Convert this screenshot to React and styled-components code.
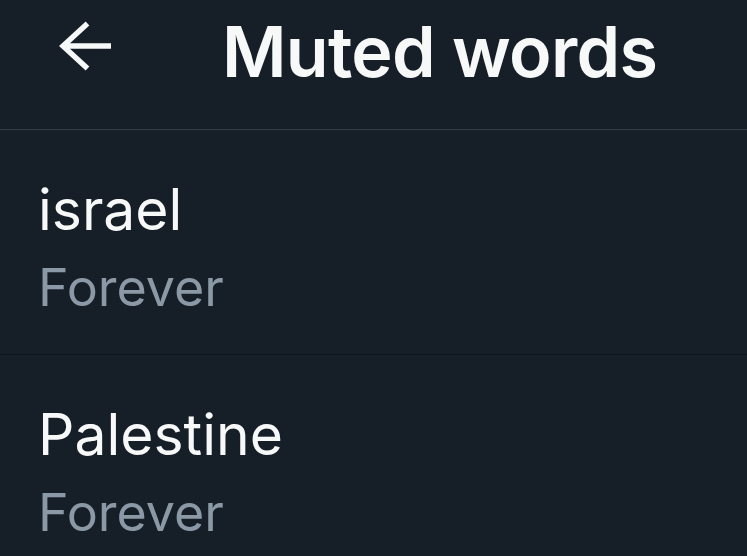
import React from "react";
import styled, { createGlobalStyle } from "styled-components";

const Global = createGlobalStyle`
  html, body { margin: 0; padding: 0; background: #161e28; }
  body { font-family: Inter, "Noto Sans", sans-serif; -webkit-font-smoothing: antialiased; }
`;

const Page = styled.div`
  width: 747px;
  height: 556px;
  overflow: hidden;
  background: #161e28;
  color: #f7f9f9;
`;

const Header = styled.header`
  height: 129px;
  display: flex;
  align-items: flex-start;
  padding-left: 59px;
  border-bottom: 1px solid #353d47;
`;

const BackButton = styled.button`
  margin-top: 21px;
  width: 54px;
  height: 50px;
  padding: 0;
  border: 0;
  background: none;
  color: #f7f9f9;
  display: flex;
`;

const Title = styled.h1`
  margin: 10px 0 0 109px;
  font-size: 70px;
  line-height: 84px;
  font-weight: 600;
  letter-spacing: -0.7px;
`;

const Row = styled.div`
  padding: 46px 0 33px 38px;
  border-bottom: 1px solid #0f151c;
`;

const Word = styled.div`
  font-size: 57px;
  line-height: 67px;
  font-weight: 400;
  color: #f7f9f9;
`;

const Duration = styled.div`
  margin-top: 12px;
  font-size: 52px;
  line-height: 66px;
  color: #8b98a5;
`;

const ArrowIcon = () => (
  <svg width="54" height="50" viewBox="0 0 54 50" fill="none">
    <path d="M28.5 2.5 L4 25 L28.5 47.5 M4 25 H52" stroke="currentColor" strokeWidth="5.4" />
  </svg>
);

const words = [
  { word: "israel", duration: "Forever" },
  { word: "Palestine", duration: "Forever" },
];

export default function App() {
  return (
    <Page>
      <Global />
      <Header>
        <BackButton aria-label="Back">
          <ArrowIcon />
        </BackButton>
        <Title>Muted words</Title>
      </Header>
      {words.map((w) => (
        <Row key={w.word}>
          <Word>{w.word}</Word>
          <Duration>{w.duration}</Duration>
        </Row>
      ))}
    </Page>
  );
}
